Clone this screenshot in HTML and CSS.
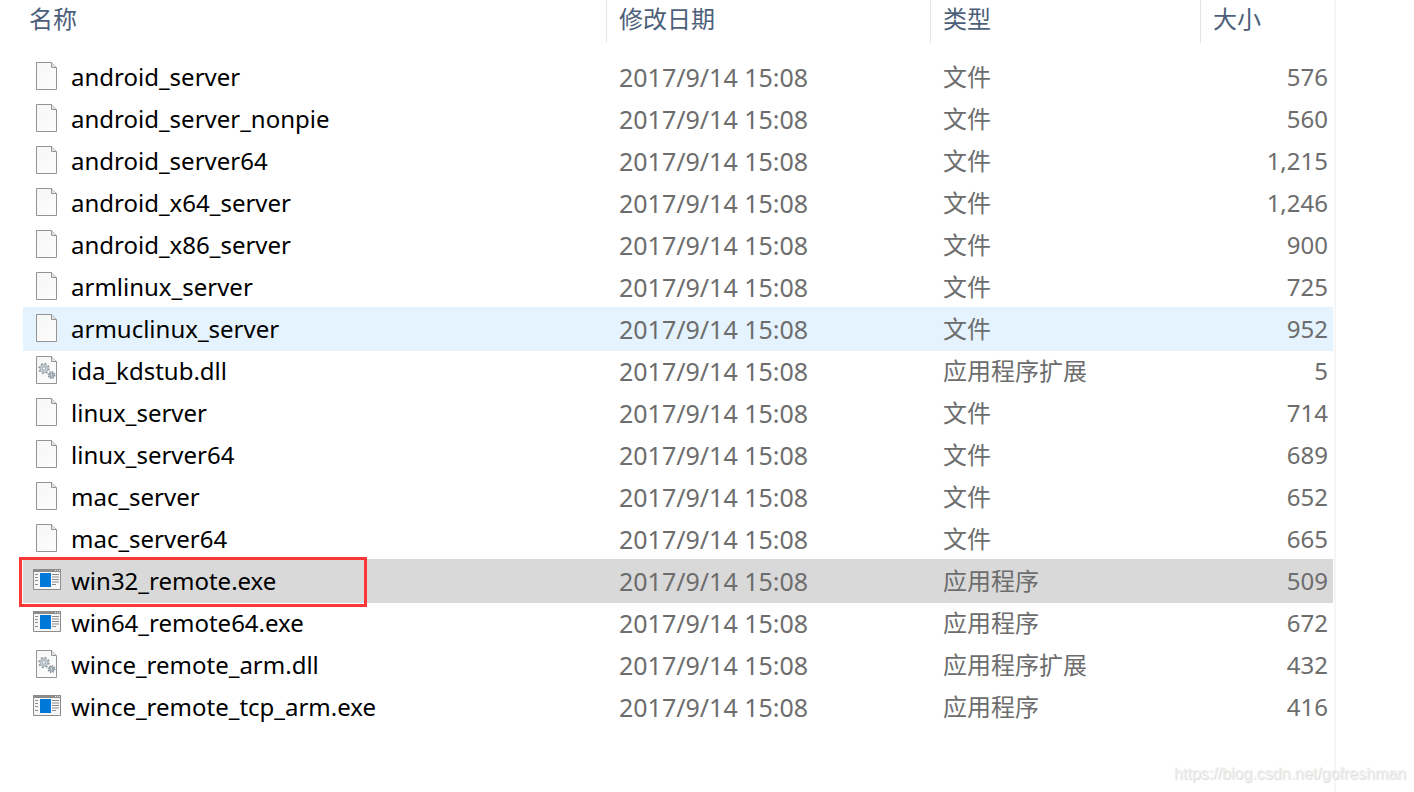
FILE: index.html
```html
<!DOCTYPE html>
<html lang="zh-CN">
<head>
    <meta charset="UTF-8">
    <meta name="viewport" content="width=device-width, initial-scale=1.0">
    <title>dbgsrv</title>
    <link rel="stylesheet" href="styles.css">
</head>
<body>
    <svg class="sprite" aria-hidden="true">
        <defs>
            <linearGradient id="paper" x1="0" y1="0" x2="1" y2="1">
                <stop offset="0" stop-color="#f5f6f6"/>
                <stop offset="1" stop-color="#fdfdfd"/>
            </linearGradient>
        </defs>
        <symbol id="icon-file" viewBox="0 0 28 28">
            <path d="M3.5 .5h15l5 5v22h-20z" fill="url(#paper)" stroke="#949494"/>
            <path d="M18.5 .5v5h5" fill="#e6e6e6" stroke="#949494"/>
        </symbol>
        <symbol id="icon-dll" viewBox="0 0 28 28">
            <path d="M3.5 .5h15l5 5v22h-20z" fill="url(#paper)" stroke="#949494"/>
            <path d="M18.5 .5v5h5" fill="#e6e6e6" stroke="#949494"/>
            <circle cx="11" cy="12.500" r="4.800" fill="none" stroke="#8f9ba3" stroke-width="1.800" stroke-dasharray="1.900 1.870"/>
            <circle cx="11" cy="12.500" r="3.900" fill="#cbd5da" stroke="#98a4ab" stroke-width=".8"/>
            <circle cx="11" cy="12.500" r="1.700" fill="#fafafa" stroke="#8f9ba3" stroke-width=".9"/>
            <circle cx="18.500" cy="19" r="3.300" fill="none" stroke="#8793a0" stroke-width="1.400" stroke-dasharray="1.300 1.290"/>
            <circle cx="18.500" cy="19" r="2.600" fill="#b4c0c8" stroke="#84919a" stroke-width=".8"/>
            <circle cx="18.500" cy="19" r="1.100" fill="#fafafa" stroke="#7f8d97" stroke-width=".7"/>
        </symbol>
        <symbol id="icon-exe" viewBox="0 0 28 28">
            <path d="M.5 3.5h27v20H.5z" fill="#f6f6f6" stroke="#8c8c8c"/>
            <path d="M0 3h28v3H0z" fill="#8c8c8c"/>
            <path d="M22 4h1v1h-1zM24 4h1v1h-1zM26 4h1v1h-1z" fill="#e8e8e8"/>
            <path d="M7 7h11v14H7z" fill="#0078d7"/>
            <path d="M2 8.500h3M2 11.500h3M2 14.500h3M2 18.500h3M19 8.500h7M19 11h7M19 13.500h7M19 16h7M19 18.500h4" stroke="#8c8c8c"/>
        </symbol>
    </svg>

    <main class="pane">
        <table class="files">
            <colgroup>
                <col>
                <col class="col-date">
                <col class="col-type">
                <col class="col-size">
            </colgroup>
            <thead>
                <tr><th>名称</th><th>修改日期</th><th>类型</th><th>大小</th></tr>
            </thead>
            <tbody>
                <tr><td><div class="name"><svg class="icon"><use href="#icon-file"/></svg>android_server</div></td><td class="date">2017/9/14 15:08</td><td>文件</td><td>576</td></tr>
                <tr><td><div class="name"><svg class="icon"><use href="#icon-file"/></svg>android_server_nonpie</div></td><td class="date">2017/9/14 15:08</td><td>文件</td><td>560</td></tr>
                <tr><td><div class="name"><svg class="icon"><use href="#icon-file"/></svg>android_server64</div></td><td class="date">2017/9/14 15:08</td><td>文件</td><td>1,215</td></tr>
                <tr><td><div class="name"><svg class="icon"><use href="#icon-file"/></svg>android_x64_server</div></td><td class="date">2017/9/14 15:08</td><td>文件</td><td>1,246</td></tr>
                <tr><td><div class="name"><svg class="icon"><use href="#icon-file"/></svg>android_x86_server</div></td><td class="date">2017/9/14 15:08</td><td>文件</td><td>900</td></tr>
                <tr><td><div class="name"><svg class="icon"><use href="#icon-file"/></svg>armlinux_server</div></td><td class="date">2017/9/14 15:08</td><td>文件</td><td>725</td></tr>
                <tr class="hovered"><td><div class="name"><svg class="icon"><use href="#icon-file"/></svg>armuclinux_server</div></td><td class="date">2017/9/14 15:08</td><td>文件</td><td>952</td></tr>
                <tr><td><div class="name"><svg class="icon"><use href="#icon-dll"/></svg>ida_kdstub.dll</div></td><td class="date">2017/9/14 15:08</td><td>应用程序扩展</td><td>5</td></tr>
                <tr><td><div class="name"><svg class="icon"><use href="#icon-file"/></svg>linux_server</div></td><td class="date">2017/9/14 15:08</td><td>文件</td><td>714</td></tr>
                <tr><td><div class="name"><svg class="icon"><use href="#icon-file"/></svg>linux_server64</div></td><td class="date">2017/9/14 15:08</td><td>文件</td><td>689</td></tr>
                <tr><td><div class="name"><svg class="icon"><use href="#icon-file"/></svg>mac_server</div></td><td class="date">2017/9/14 15:08</td><td>文件</td><td>652</td></tr>
                <tr><td><div class="name"><svg class="icon"><use href="#icon-file"/></svg>mac_server64</div></td><td class="date">2017/9/14 15:08</td><td>文件</td><td>665</td></tr>
                <tr class="selected"><td><div class="name marked"><svg class="icon"><use href="#icon-exe"/></svg>win32_remote.exe</div></td><td class="date">2017/9/14 15:08</td><td>应用程序</td><td>509</td></tr>
                <tr><td><div class="name"><svg class="icon"><use href="#icon-exe"/></svg>win64_remote64.exe</div></td><td class="date">2017/9/14 15:08</td><td>应用程序</td><td>672</td></tr>
                <tr><td><div class="name"><svg class="icon"><use href="#icon-dll"/></svg>wince_remote_arm.dll</div></td><td class="date">2017/9/14 15:08</td><td>应用程序扩展</td><td>432</td></tr>
                <tr><td><div class="name"><svg class="icon"><use href="#icon-exe"/></svg>wince_remote_tcp_arm.exe</div></td><td class="date">2017/9/14 15:08</td><td>应用程序</td><td>416</td></tr>
            </tbody>
        </table>
    </main>
    <div class="watermark">https://blog.csdn.net/gofreshman</div>
</body>
</html>
```
FILE: styles.css
```css
*,
*::after {
    box-sizing: border-box;
}

body {
    margin: 0;
    background: #fff;
    color: #6d6d6d;
    font-family: "Noto Sans", "Noto Sans CJK SC", sans-serif;
    font-size: 24px;
    line-height: 32px;
}

.sprite {
    position: absolute;
    width: 0;
    height: 0;
}

.pane {
    min-height: 100vh;
    margin-right: 78px;
    padding: 0 1px 0 23px;
    border-right: 2px solid #f5f5f5;
}

.files {
    width: 100%;
    table-layout: fixed;
    border-spacing: 0;
}

.col-date {
    width: 324px;
}

.col-type {
    width: 270px;
}

.col-size {
    width: 133px;
}

th {
    height: 43px;
    padding: 0 0 6px 12px;
    border-left: 1px solid #e5e5e5;
    color: #4c607a;
    font-weight: normal;
    text-align: left;
}

th:first-child {
    padding-left: 6px;
    border-left: none;
}

tbody::before {
    content: "";
    display: block;
    height: 13px;
}

td {
    height: 42px;
    padding: 0 0 0 13px;
    white-space: nowrap;
}

td:first-child {
    padding-left: 0;
    color: #000;
}

td:last-child {
    padding-right: 5px;
    text-align: right;
}

.date {
    font-size: 25px;
}

.name {
    position: relative;
    display: flex;
    align-items: center;
    gap: 10px;
    height: 42px;
    padding-left: 10px;
}

.icon {
    width: 28px;
    height: 28px;
    margin-bottom: 2px;
}

.hovered {
    background: #e5f3ff;
    box-shadow: 0 -1px #e5f3ff, 0 1px #e5f3ff;
}

.selected {
    background: #d9d9d9;
    box-shadow: 0 -1px #d9d9d9, 0 1px #d9d9d9;
}

/* red frame drawn around the file to pick */
.marked::after {
    content: "";
    position: absolute;
    top: -3px;
    left: -4px;
    width: 348px;
    height: 50px;
    border: 3px solid #fb3737;
}

.watermark {
    position: absolute;
    right: 8px;
    bottom: 8px;
    color: #f0f0f0;
    font-family: "Liberation Sans", Arial, sans-serif;
    font-size: 16px;
    line-height: 20px;
    text-shadow: 1px 1px 1px #d8d8d8;
}
```
